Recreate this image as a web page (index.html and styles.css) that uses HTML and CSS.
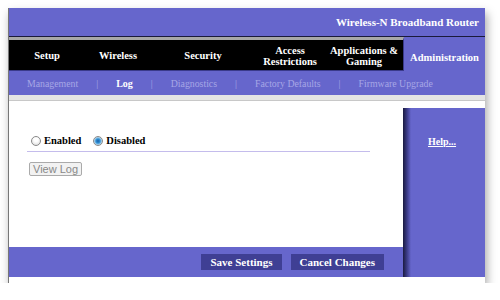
FILE: index.html
```html
<!DOCTYPE html>
<html lang="en">
<head>
    <meta charset="UTF-8">
    <title>Log</title>
    <link rel="stylesheet" href="styles.css">
</head>
<body>
    <div class="window">
        <div class="header">Wireless-N Broadband Router</div>

        <div class="nav">
            <div class="tabs">
                <div class="tab">Setup</div>
                <div class="tab">Wireless</div>
                <div class="tab">Security</div>
                <div class="tab">Access<br>Restrictions</div>
                <div class="tab">Applications &amp;<br>Gaming</div>
            </div>
            <div class="tab-active">Administration</div>
        </div>

        <div class="submenu">
            <span>Management</span>
            <span class="sep">|</span>
            <span class="current">Log</span>
            <span class="sep">|</span>
            <span>Diagnostics</span>
            <span class="sep">|</span>
            <span>Factory Defaults</span>
            <span class="sep">|</span>
            <span>Firmware Upgrade</span>
        </div>

        <div class="strip"></div>

        <div class="body">
            <div class="main">
                <div class="content">
                    <div class="radios">
                        <label><input type="radio" name="log"> Enabled</label>
                        <label><input type="radio" name="log" checked> Disabled</label>
                    </div>
                    <button class="viewlog">View Log</button>
                </div>
                <div class="footer">
                    <button class="btn">Save Settings</button>
                    <button class="btn">Cancel Changes</button>
                </div>
            </div>
            <div class="sidebar">
                <a href="#">Help...</a>
            </div>
        </div>

        <div class="bottom"></div>
    </div>
</body>
</html>
```

FILE: styles.css
```css
body {
  margin: 0;
  background-color: #ffffff;
  font-family: "Liberation Serif", serif;
}
.window {
  margin: 8px 0 0 8px;
  width: 476px;
  border-left: 1px solid #777;
  box-shadow: 2px 5px 9px rgba(0, 0, 0, 0.35);
  background-color: #fff;
}
.header {
  height: 28px;
  background-color: #6666cc;
  border-bottom: 1px solid #1a1a3a;
  color: #fff;
  font-weight: bold;
  font-size: 11px;
  display: flex;
  align-items: center;
  justify-content: flex-end;
  padding-right: 6px;
}
.nav {
  display: flex;
  height: 34px;
}
.tabs {
  display: grid;
  grid-template-columns: 76px 66px 104px 70px 78px;
  background-color: #000;
  border-top: 3px solid #a8a8a8;
  border-right: 1px solid #3a3a8a;
  border-bottom: 1px solid #3a3a8a;
}
.tab {
  color: #fff;
  font-weight: bold;
  font-size: 10.5px;
  line-height: 11px;
  display: flex;
  align-items: center;
  justify-content: center;
  text-align: center;
  padding-top: 1px;
}
.tab-active {
  flex: 1;
  background-color: #6666cc;
  color: #fff;
  font-weight: bold;
  font-size: 10.5px;
  display: flex;
  align-items: center;
  justify-content: center;
  padding-top: 7px;
}
.submenu {
  height: 24px;
  background-color: #6666cc;
  display: flex;
  align-items: center;
  gap: 18px;
  padding-left: 18px;
  font-size: 9.8px;
  color: #a6a6e6;
}
.submenu .current {
  color: #fff;
  font-weight: bold;
  font-size: 10px;
}
.strip {
  height: 5px;
  background-color: #e4e4e4;
  border-bottom: 1px solid #c8c8c8;
}
.body {
  display: flex;
}
.main {
  width: 394px;
}
.content {
  height: 146px;
  box-sizing: border-box;
  padding: 34px 0 0 18px;
}
.radios {
  width: 343px;
  display: flex;
  gap: 8px;
  padding-bottom: 5px;
  border-bottom: 1px solid #c4bcec;
  font-size: 10.5px;
  font-weight: bold;
}
.radios label {
  display: flex;
  align-items: center;
}
.radios input {
  appearance: none;
  margin: 0 3px 0 4px;
  width: 10px;
  height: 10px;
  border: 1px solid #8a8a8a;
  border-radius: 50%;
  background: radial-gradient(circle at 50% 35%, #ffffff 30%, #d4d4d4 100%);
}
.radios input:checked {
  background: radial-gradient(circle, #1c5fa8 0, #2d8fd4 2px, #9ccbea 3.5px, #e8e8e8 4.5px);
}
.viewlog {
  margin: 10px 0 0 2px;
  padding: 0 3px;
  height: 14px;
  white-space: nowrap;
  font-family: "Liberation Sans", Arial, sans-serif;
  font-size: 11px;
  line-height: 12px;
  color: #888;
  background-color: #f2f2f2;
  border: 1px solid #aaa;
  border-radius: 2px;
}
.footer {
  height: 30px;
  background-color: #6666cc;
  display: flex;
  align-items: center;
  justify-content: flex-end;
  gap: 9px;
  padding-right: 19px;
}
.btn {
  height: 16px;
  padding: 0 9px;
  background-color: #3f3f94;
  border: none;
  color: #fff;
  font-family: "Liberation Serif", serif;
  font-weight: bold;
  font-size: 11px;
}
.sidebar {
  flex: 1;
  margin-top: 7px;
  height: 169px;
  box-sizing: border-box;
  padding: 23px 0 0 25px;
  background: linear-gradient(to right, #1a1a40 0px, #3c3c88 4px, #6666cc 8px);
}
.sidebar a {
  color: #fff;
  font-weight: bold;
  font-size: 10px;
}
.bottom {
  height: 6px;
  background-color: #fff;
}
```
